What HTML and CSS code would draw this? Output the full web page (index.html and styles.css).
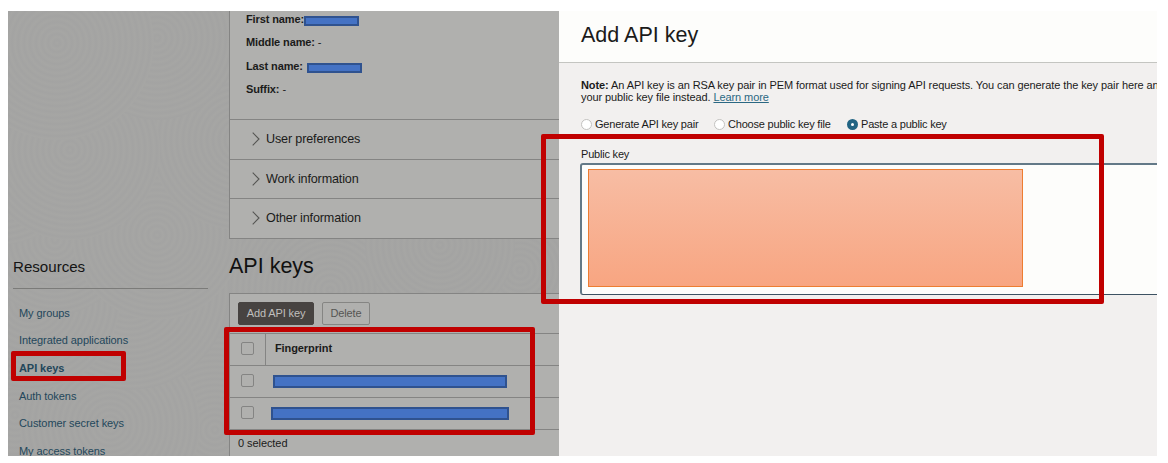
FILE: index.html
```html
<!DOCTYPE html>
<html lang="en">
<head>
<meta charset="utf-8">
<title>Add API key</title>
<link rel="stylesheet" href="styles.css">
</head>
<body>
<main class="window">
  <div class="page">
    <svg class="texture" width="551" height="445" viewBox="8 11 551 445" aria-hidden="true">
      <defs>
        <radialGradient id="ring" gradientUnits="userSpaceOnUse" cx="0" cy="0" r="6" spreadMethod="repeat">
          <stop offset="0" stop-color="#a6a6a4"/><stop offset=".5" stop-color="#a3a3a2"/><stop offset="1" stop-color="#a6a6a4"/>
        </radialGradient>
      </defs>
      <g fill="url(#ring)">
        <circle r="95" transform="translate(15 415)"/>
        <circle r="95" transform="translate(215 430)"/>
        <circle r="90" transform="translate(110 425)"/>
        <circle r="100" transform="translate(130 290)"/>
        <circle r="100" transform="translate(520 270)"/>
        <circle r="100" transform="translate(330 290)"/>
        <circle r="75" transform="translate(440 245)"/>
        <circle r="90" transform="translate(30 300)"/>
        <circle r="75" transform="translate(55 240)"/>
        <circle r="80" transform="translate(0 165)"/>
        <circle r="85" transform="translate(157 235)"/>
        <circle r="90" transform="translate(240 140)"/>
        <circle r="90" transform="translate(70 150)"/>
        <circle r="82" transform="translate(157 38)"/>
        <circle r="97" transform="translate(57 43)"/>
      </g>
    </svg>
    <nav class="sidebar">
      <h2 class="sidebar-title">Resources</h2>
      <ul class="links">
        <li>My groups</li>
        <li>Integrated applications</li>
        <li class="current">API keys</li>
        <li>Auth tokens</li>
        <li>Customer secret keys</li>
        <li>My access tokens</li>
      </ul>
    </nav>
    <div class="content">
      <section class="card profile">
        <div class="fields">
          <p><b>First name:</b><i class="mask mask-first"></i></p>
          <p><b>Middle name:</b> -</p>
          <p><b>Last name:</b><i class="mask mask-last"></i></p>
          <p><b>Suffix:</b> -</p>
        </div>
        <div class="fold"><svg class="chevron" viewBox="0 0 8 14"><path d="M.7 .7 7 7 .7 13.3"/></svg>User preferences</div>
        <div class="fold"><svg class="chevron" viewBox="0 0 8 14"><path d="M.7 .7 7 7 .7 13.3"/></svg>Work information</div>
        <div class="fold"><svg class="chevron" viewBox="0 0 8 14"><path d="M.7 .7 7 7 .7 13.3"/></svg>Other information</div>
      </section>
      <h1 class="section-title">API keys</h1>
      <section class="card keys">
        <div class="toolbar"><span class="btn primary">Add API key</span><span class="btn">Delete</span></div>
        <div class="row head"><span class="cell-check"><i class="check"></i></span><b>Fingerprint</b></div>
        <div class="row"><span class="cell-check"><i class="check"></i></span><i class="mask key-one"></i></div>
        <div class="row"><span class="cell-check"><i class="check"></i></span><i class="mask key-two"></i></div>
        <div class="selected">0 selected</div>
      </section>
    </div>
  </div>
  <aside class="panel">
    <header class="panel-head">Add API key</header>
    <div class="panel-body">
      <p class="note"><b>Note:</b> An API key is an RSA key pair in PEM format used for signing API requests. You can generate the key pair here an<br><span class="note-second">your public key file instead. <span class="learn">Learn more</span></span></p>
      <div class="radios">
        <span class="option opt-one"><i class="radio"></i>Generate API key pair</span>
        <span class="option opt-two"><i class="radio"></i>Choose public key file</span>
        <span class="option opt-three"><i class="radio on"></i>Paste a public key</span>
      </div>
      <div class="label">Public key</div>
      <div class="textarea"><div class="redacted"></div></div>
    </div>
  </aside>
</main>
<div class="marker marker-nav"></div>
<div class="marker marker-table"></div>
<div class="marker marker-form"></div>
</body>
</html>
```
FILE: styles.css
```css
* { box-sizing: border-box; }
body { margin: 0; padding: 11px 8px; height: 463px; overflow: hidden; background: #fff; font: 11px/14px "Liberation Sans", Arial, sans-serif; color: #1b1b1a; position: relative; }
p, h1, h2, ul { margin: 0; padding: 0; font-weight: normal; }
i { display: block; flex: none; }
.window { display: grid; grid-template-columns: 551px 598px; width: 1149px; height: 445px; overflow: hidden; }
.page { display: grid; grid-template-columns: 221px 330px; height: 445px; overflow: hidden; background: #a4a4a3; position: relative; }
.texture { position: absolute; inset: 0; }
.sidebar { position: relative; padding: 246px 21px 0 5px; height: 445px; overflow: hidden; }
.sidebar-title { font-size: 15.1px; line-height: 20px; color: #141414; height: 32px; border-bottom: 1px solid #7b7b79; }
.links { list-style: none; padding: 9.6px 0 0 6px; color: #23475b; letter-spacing: -.07px; }
.links li { height: 27.7px; line-height: 28px; white-space: nowrap; }
.links .current { font-weight: bold; }
.content { position: relative; min-width: 0; }
.card { background: #b0b0ae; border-left: 1px solid #848483; }
.profile { height: 228px; border-bottom: 1px solid #848483; }
.fields { height: 108px; padding: 1px 0 0 16px; }
.fields p { display: flex; height: 23.3px; line-height: 15px; letter-spacing: -.12px; }
.fields b { margin-right: 3px; }
.mask { background: #4472c4; border: 2px solid #2f528f; }
.mask-first { width: 55px; height: 10px; margin: 4px 0 0 -3px; }
.mask-last { width: 55px; height: 10px; margin: 4px 0 0 1px; }
.fold { display: flex; align-items: center; height: 39.6px; border-top: 1px solid #848483; padding-left: 22px; font-size: 12.6px; gap: 6px; letter-spacing: -.15px; }
.chevron { width: 8px; height: 14px; fill: none; stroke: #555553; stroke-width: 1.1; }
.section-title { font-size: 21.5px; line-height: 55px; height: 54px; color: #111; }
.keys { height: 163px; border-top: 1px solid #848483; }
.toolbar { display: flex; gap: 8px; height: 39px; padding: 8px 0 0 8px; }
.btn { width: 48px; height: 23px; text-align: center; line-height: 20px; border: 1px solid #858583; border-radius: 2px; color: #555553; letter-spacing: -.12px; }
.btn.primary { width: 76px; background: #474341; border-color: #474341; color: #c0bfbd; }
.row { display: flex; height: 32px; border-top: 1px solid #848483; position: relative; }
.cell-check { width: 36px; padding: 8px 0 0 11px; }
.head .cell-check { border-right: 1px solid #848483; }
.head b { padding: 7px 0 0 9px; letter-spacing: -.1px; }
.check { width: 13px; height: 13px; border: 1px solid #848483; border-radius: 2px; }
.key-one { width: 234px; height: 13px; margin: 9px 0 0 7px; }
.key-two { width: 238px; height: 13px; margin: 9px 0 0 5px; }
.selected { height: 28px; border-top: 1px solid #848483; padding: 6px 0 0 8px; letter-spacing: -.07px; }
.panel { background: #f2f0ef; overflow: hidden; }
.panel-head { height: 52px; padding: 12px 0 0 22px; font-size: 21.5px; line-height: 24px; background: #fdfdfb; border-bottom: 1px solid #c4c5c1; }
.panel-body { padding: 16px 0 0 22px; }
.note { line-height: 12px; height: 38px; white-space: nowrap; letter-spacing: -.09px; }
.learn { color: #2b6883; text-decoration: underline; }
.radios { display: flex; height: 14px; }
.option { display: flex; align-items: center; gap: 3px; white-space: nowrap; letter-spacing: -.2px; }
.opt-one { width: 133px; }
.opt-two { width: 133px; }
.radio { width: 11px; height: 11px; border: 1px solid #c3c2c0; border-radius: 50%; background: #fff; }
.radio.on { border: 4px solid #216483; }
.label { padding-top: 16px; height: 32px; line-height: 14px; letter-spacing: -.2px; }
.textarea { margin-left: -1px; height: 132px; width: 590px; padding: 4px 6px; background: #fdfdfb; border: 2px solid #637987; border-bottom: 1px solid #3d5262; border-radius: 3px; }
.redacted { width: 435px; height: 118px; border: 1px solid #ed7d31; background: linear-gradient(#f7bda4, #f8a581); }
.marker { position: absolute; border: 5px solid #c00000; border-radius: 2px; }
.marker-nav { left: 11px; top: 351px; width: 115px; height: 30px; }
.marker-table { left: 224px; top: 327px; width: 311px; height: 108px; }
.marker-form { left: 541px; top: 134px; width: 563px; height: 170px; }
```
